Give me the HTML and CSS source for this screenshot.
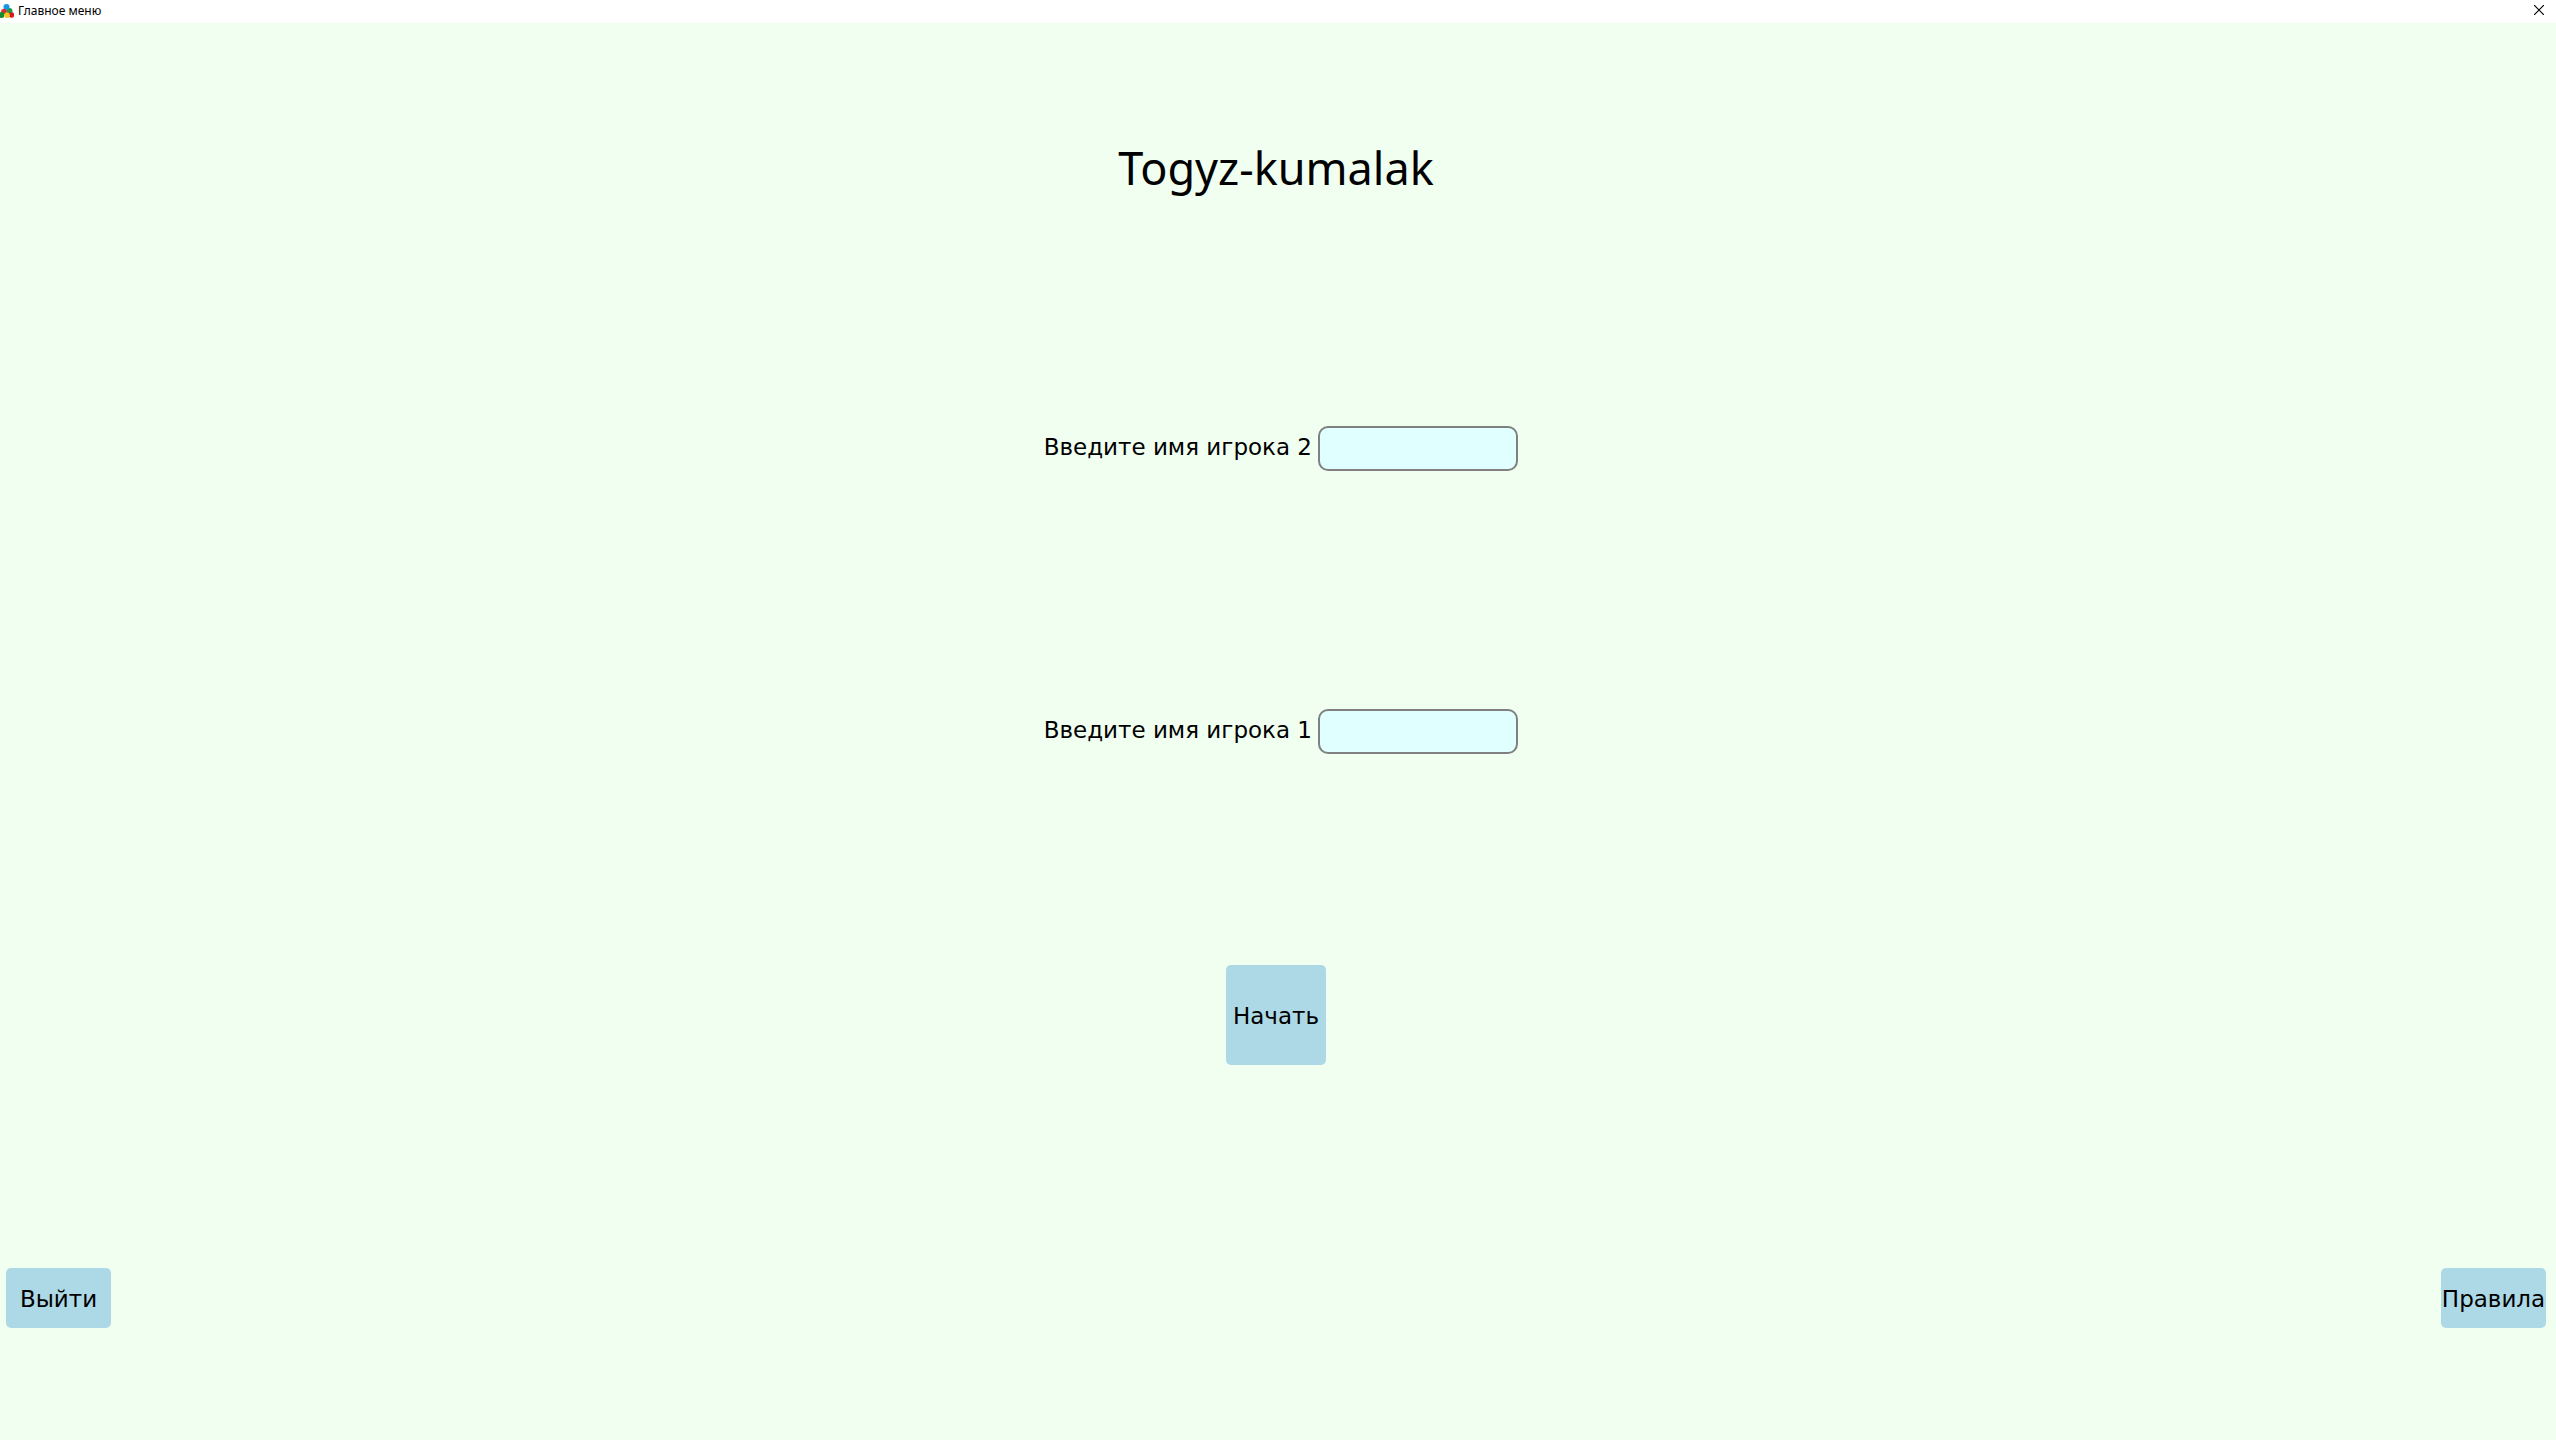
FILE: index.html
```html
<!DOCTYPE html>
<html lang="ru">
<head>
<meta charset="utf-8">
<title>Главное меню</title>
<link rel="stylesheet" href="styles.css">
</head>
<body>
<header class="titlebar">
  <svg class="app-icon" viewBox="0 0 14 14" aria-hidden="true">
    <circle cx="9.5" cy="7" r="3" fill="#25983c"/>
    <circle cx="6.5" cy="3" r="3" fill="#1595e8"/>
    <circle cx="4" cy="7.5" r="2.8" fill="#d7302a"/>
    <circle cx="1.5" cy="11" r="3" fill="#188c32"/>
    <circle cx="11.5" cy="11" r="2.8" fill="#d71920"/>
    <circle cx="7" cy="11.2" r="2.8" fill="#f3ca25"/>
  </svg>
  <span class="window-title">Главное меню</span>
  <button class="close" type="button" aria-label="Закрыть">
    <svg class="close-icon" viewBox="0 0 10 10" aria-hidden="true"><path d="M0 0L10 10M10 0L0 10" stroke="#000" stroke-width="1.2"/></svg>
  </button>
</header>
<main class="menu">
  <h1 class="title">Togyz-kumalak</h1>
  <div class="field">
    <label class="label" for="player2">Введите имя игрока 2</label>
    <input class="name-input" id="player2" type="text">
  </div>
  <div class="field">
    <label class="label" for="player1">Введите имя игрока 1</label>
    <input class="name-input" id="player1" type="text">
  </div>
  <button class="button start" type="button">Начать</button>
  <div class="footer">
    <button class="button" type="button">Выйти</button>
    <button class="button" type="button">Правила</button>
  </div>
</main>
</body>
</html>
```
FILE: styles.css
```css
* {
  box-sizing: border-box;
}

body {
  margin: 0;
  min-height: 100vh;
  display: flex;
  flex-direction: column;
  background: #f0fff0;
  color: #000;
  font-family: "DejaVu Sans", Verdana, sans-serif;
  font-size: 23px;
}

.titlebar {
  display: flex;
  align-items: center;
  height: 23px;
  padding: 0 10px 1px 0;
  background: #fff;
}

.app-icon {
  width: 14px;
  height: 14px;
  margin-right: 4px;
}

.window-title {
  font: 12px/20px "Noto Sans", "Segoe UI", sans-serif;
}

.close {
  display: flex;
  margin-left: auto;
  padding: 0 2px 2px;
  border: 0;
  background: none;
}

.close-icon {
  width: 10px;
  height: 10px;
}

.menu {
  flex: 1;
  display: grid;
  grid-template-rows: repeat(5, 1fr);
  align-items: center;
  justify-items: center;
  padding: 0 10px 0 6px;
}

.title {
  margin: 0;
  padding-top: 6px;
  font: 400 45px/64px "Noto Sans", "Segoe UI", sans-serif;
}

.field {
  display: flex;
  align-items: center;
  gap: 6px;
}

.label {
  min-width: 278px;
  padding-bottom: 2px;
  text-align: right;
}

.name-input {
  width: 200px;
  height: 45px;
  padding: 0 8px;
  border: 2px solid #808080;
  border-radius: 10px;
  background: #e0ffff;
  font: inherit;
}

.button {
  width: 105px;
  height: 60px;
  padding: 2px 0 0;
  border: 0;
  border-radius: 5px;
  background: #add8e6;
  color: inherit;
  font: inherit;
  white-space: nowrap;
}

.start {
  width: 100px;
  height: 100px;
}

.footer {
  justify-self: stretch;
  display: flex;
  justify-content: space-between;
}
```
